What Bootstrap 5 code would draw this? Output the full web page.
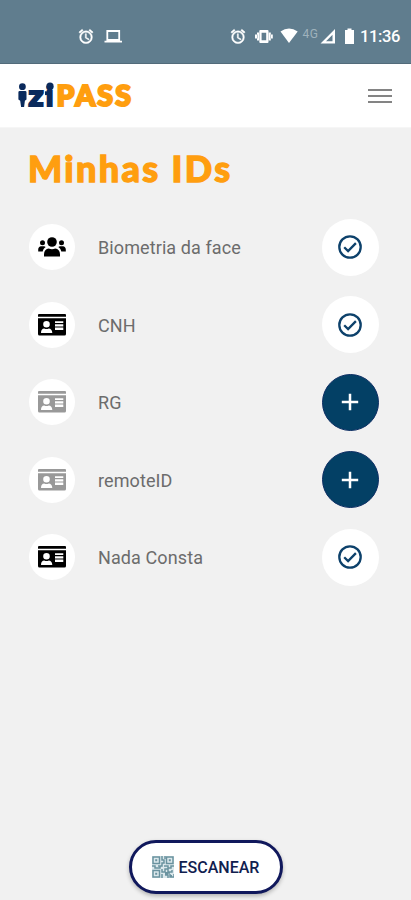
<!DOCTYPE html>
<html lang="pt-BR">
<head>
<meta charset="utf-8">
<meta name="viewport" content="width=device-width, initial-scale=1">
<title>iziPASS</title>
<link href="https://cdn.jsdelivr.net/npm/bootstrap@5.3.0/dist/css/bootstrap.min.css" rel="stylesheet">
<style>
body{font-family:Roboto,sans-serif;background:#f1f1f1;height:900px;overflow:hidden}
svg{display:block;flex:none}
.status{height:64px;background:#607d8e;border-bottom:1px solid #526b7a;color:#fff}
.topbar{height:64px;background:#fff;border-bottom:1px solid #f6f6f6}
.brand-art{font-family:Lato,sans-serif;font-weight:900}
.menu-btn{width:24px;height:14px;display:flex;flex-direction:column;justify-content:space-between;border:0;padding:0;background:none;margin-right:19px}
.menu-btn span{height:2px;width:24px;background:#848484}
.page-title{font:900 36px/40px Lato,sans-serif;color:#ff9e0f;margin:20px 0 0 28px;letter-spacing:2.35px;-webkit-text-stroke:1.3px #ff9e0f;white-space:nowrap}
.ids{margin-top:30.500px}
.id-row{height:57px;margin-bottom:20.6px;padding:0 32.500px 0 29px}
.kind{width:46px;height:46px;background:#fff;color:#000}
.kind.off{color:#999}
.id-name{font-size:18px;line-height:24px;color:#6c6c6c;margin-left:23px;letter-spacing:.1px;padding-top:2px}
.act{width:57px;height:57px;background:#fff;border:0;padding:0;color:#0d416b}
.act.add{background:#034065;color:#fff;border:1px solid #0c2d63}
.scan{width:154px;height:54px;border:3px solid #10185c;background:#fff;color:#10204f;font-size:16px;font-weight:500;box-shadow:0 2px 4px #0004;padding:0;gap:5px}
.scan span{padding-top:1px}
.dock{padding-bottom:6px}
</style>
<script src="https://cdn.jsdelivr.net/npm/bootstrap@5.3.0/dist/js/bootstrap.bundle.min.js"></script>
</head>
<body class="d-flex flex-column">
<svg width="0" height="0" class="d-none">
<symbol id="alarm" viewBox="0 0 24 24"><path fill="currentColor" d="M22 5.72l-4.6-3.86-1.29 1.53 4.6 3.86L22 5.72zM7.88 3.39L6.6 1.86 2 5.71l1.29 1.53 4.59-3.85zM12.5 8H11v6l4.75 2.85.75-1.23-4-2.37V8zM12 4a9 9 0 1 0 0 18 9 9 0 0 0 0-18zm0 16a7 7 0 1 1 0-14 7 7 0 0 1 0 14z" stroke="currentColor" stroke-width=".7"/></symbol>
<symbol id="card" viewBox="0 0 28 22"><path fill="currentColor" d="M1 0h26q1 0 1 1v1.700H0V1q0-1 1-1z"/><path fill="currentColor" fill-rule="evenodd" d="M0 4.300h28V20q0 1.500-1.500 1.500h-25Q0 21.500 0 20zM8.500 7a3.300 3.300 0 1 0 0 6.600 3.300 3.300 0 0 0 0-6.600zM3 19h11.300c0-3-1.700-4.500-3.500-4.500q-2.300 1-4.600 0C4.200 14.500 3 16 3 19zM17 7.200v1.900h8.300V7.200zM17 10.200v2.200h8.300v-2.200zM17 13.500v2.500h8.300v-2.500z"/></symbol>
<symbol id="people" viewBox="0 0 28 20"><g fill="currentColor"><circle cx="14" cy="5" r="4.800"/><circle cx="4.500" cy="5.700" r="2.500"/><circle cx="23.500" cy="5.700" r="2.500"/><path d="M6 19.500v-2.200c0-3.500 2-5.600 4.700-5.800q3.300 1.500 6.600 0c2.700.2 4.700 2.300 4.700 5.800v2.200zM.2 14.500v-2C.2 10.600 1.500 9.300 3 9.300h3.200l1.500.6c-1.800 1.100-2.600 2.600-3 4.600zM27.800 14.500v-2c0-1.900-1.300-3.200-2.800-3.200h-3.200l-1.500.6c1.800 1.100 2.600 2.600 3 4.600z"/></g></symbol>
<symbol id="check" viewBox="0 0 24 24"><circle cx="12" cy="12" r="10.700" fill="none" stroke="currentColor" stroke-width="2.300"/><path d="M6.200 12.200l3.900 3.900 7.800-8" fill="none" stroke="currentColor" stroke-width="2.300"/></symbol>
<symbol id="plus" viewBox="0 0 18 18"><path d="M9 .8v16.400M.8 9h16.400" stroke="currentColor" stroke-width="2.500"/></symbol>
</svg>

<header class="status flex-shrink-0">
<svg width="411" height="63" viewBox="0 0 411 63" color="#fff">
<use href="#alarm" x="77.500" y="28" width="17" height="17"/>
<path d="M107.300 31h11.900v9h-11.900zM104.500 41.700h17.500" fill="none" stroke="#fff" stroke-width="1.800"/>
<use href="#alarm" x="229.500" y="28" width="17" height="17"/>
<path fill="#fff" fill-rule="evenodd" d="M260.300 30h7.200q1 0 1 1v11q0 1-1 1h-7.200q-1 0-1-1V31q0-1 1-1zm1.300 2.700v7.600h4.600v-7.600zM257 32.500h2.600v8H257zM268.200 32.500h2.600v8h-2.600zM255 34.500h2.400v4H255zM270.400 34.500h2.400v4h-2.400z"/>
<path fill="#fff" d="M280.500 31.500q8.500-6.200 17.200 0L289 43z"/>
<text x="302.500" y="37.500" font-size="12" fill="#9fb2bc" textLength="15.500">4G</text>
<path fill="#fff" fill-rule="evenodd" d="M320.500 43.500l14.500-14.500v14.500zm5.500-2.300h6.500v-6.500z"/>
<path fill="#fff" d="M347.500 28.500h4v1.500h2.500v14h-9V30h2.500z"/>
<text x="360" y="42.300" font-size="16.500" font-weight="500" fill="#fff" textLength="40.500">11:36</text>
</svg>
</header>

<nav class="topbar flex-shrink-0 d-flex align-items-center justify-content-between ps-3">
<svg class="brand-art" width="120" height="36" viewBox="16 78 120 36">
<g fill="#0a2a5c"><circle cx="22.400" cy="86.700" r="3.400"/><path d="M18.400 92.300q0-1.300 1.300-1.300h5.500q1.300 0 1.300 1.300v7.200l-1.600 1.200-.8 6.300h-3l-.9-6.300-1.800-1.200z"/>
<text x="28.600" y="105.700" font-size="28" stroke="#0a2a5c" stroke-width="2" textLength="15" lengthAdjust="spacingAndGlyphs">z</text>
<text x="46" y="105.700" font-size="28" stroke="#0a2a5c" stroke-width="2">i</text><circle cx="50" cy="86.200" r="3.600"/><path d="M45 91.300h4v3.800h-4z"/></g>
<text x="56.500" y="105.700" font-size="28.500" fill="#ff9e0f" stroke="#ff9e0f" stroke-width="2.200" textLength="74.500">PASS</text>
</svg>
<button class="menu-btn" aria-label="Menu"><span></span><span></span><span></span></button>
</nav>

<main class="flex-grow-1">
<h1 class="page-title">Minhas IDs</h1>
<div class="ids">
<div class="id-row d-flex align-items-center"><div class="kind rounded-circle d-flex align-items-center justify-content-center"><svg width="28" height="20"><use href="#people"/></svg></div><span class="id-name flex-grow-1">Biometria da face</span><button class="act rounded-circle d-flex align-items-center justify-content-center"><svg width="24" height="24"><use href="#check"/></svg></button></div>
<div class="id-row d-flex align-items-center"><div class="kind rounded-circle d-flex align-items-center justify-content-center"><svg width="28" height="22"><use href="#card"/></svg></div><span class="id-name flex-grow-1">CNH</span><button class="act rounded-circle d-flex align-items-center justify-content-center"><svg width="24" height="24"><use href="#check"/></svg></button></div>
<div class="id-row d-flex align-items-center"><div class="kind off rounded-circle d-flex align-items-center justify-content-center"><svg width="28" height="22"><use href="#card"/></svg></div><span class="id-name flex-grow-1">RG</span><button class="act add rounded-circle d-flex align-items-center justify-content-center"><svg width="18" height="18"><use href="#plus"/></svg></button></div>
<div class="id-row d-flex align-items-center"><div class="kind off rounded-circle d-flex align-items-center justify-content-center"><svg width="28" height="22"><use href="#card"/></svg></div><span class="id-name flex-grow-1">remoteID</span><button class="act add rounded-circle d-flex align-items-center justify-content-center"><svg width="18" height="18"><use href="#plus"/></svg></button></div>
<div class="id-row d-flex align-items-center"><div class="kind rounded-circle d-flex align-items-center justify-content-center"><svg width="28" height="22"><use href="#card"/></svg></div><span class="id-name flex-grow-1">Nada Consta</span><button class="act rounded-circle d-flex align-items-center justify-content-center"><svg width="24" height="24"><use href="#check"/></svg></button></div>
</div>
</main>

<footer class="dock d-flex justify-content-center flex-shrink-0">
<button class="scan rounded-pill d-flex align-items-center justify-content-center">
<svg width="22" height="22" viewBox="0 0 22 22"><path fill="#dce8ec" d="M0 0h22v22H0z"/><g fill="none" stroke="#6a929f" stroke-width="1.500"><path d="M1 1h6.500v6.500H1zM14.500 1H21v6.500h-6.500zM1 14.500h6.500V21H1z"/><path d="M10 0v4h2v3h-2v3H6M0 10h3v2h5v-2M13 3V0M12 10h4v2h3v-2h3M10 13v3h3v-3h3v3h4v-2M10 18v4M13 19h3v3M18 18v3h4v-3M16 17h2"/></g><path fill="#6a929f" d="M3.200 3.200h2v2h-2zM16.800 3.200h2v2h-2zM3.200 16.800h2v2h-2zM13 16h3v3h-3zM18 19h2v2h-2z"/></svg>
<span>ESCANEAR</span></button>
</footer>
</body>
</html>
